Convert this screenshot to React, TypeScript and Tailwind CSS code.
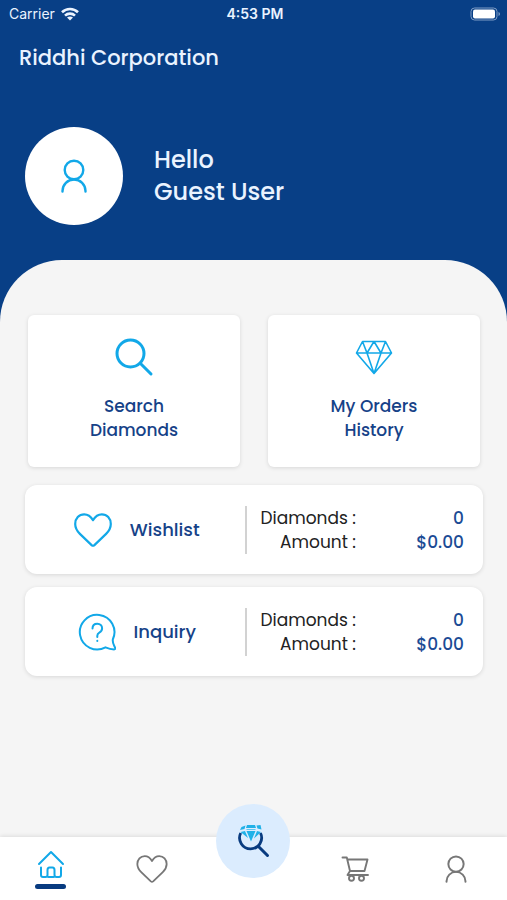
import type { ReactNode } from 'react'

interface Summary {
  label: string
  icon: ReactNode
  diamonds: number
  amount: string
}

function UserIcon({ className }: { className: string }) {
  return (
    <svg viewBox="0 0 26 34" fill="none" stroke="currentColor" strokeWidth="2.4" strokeLinecap="round" className={className} aria-hidden="true">
      <circle cx="13" cy="11" r="9.3" />
      <path d="M1.5 32.500v-.5a11.500 11.500 0 0 1 23 0v.5" />
    </svg>
  )
}

function HeartIcon({ className }: { className: string }) {
  return (
    <svg viewBox="0 0 38 34" fill="none" stroke="currentColor" strokeWidth="2.2" strokeLinejoin="round" className={className} aria-hidden="true">
      <path d="M19 7.2C16.500 3 13.500 1.300 10.200 1.300 5 1.300 1.200 5.500 1.200 11c0 4.200 1.800 7 4.700 9.900l11.700 11.200q1.400 1.200 2.800 0l11.700-11.200c2.900-2.900 4.700-5.700 4.700-9.900 0-5.500-3.800-9.700-9-9.700C24.500 1.300 21.500 3 19 7.200Z" />
    </svg>
  )
}

function SearchIcon() {
  return (
    <svg viewBox="0 0 40 40" fill="none" stroke="currentColor" strokeWidth="3" strokeLinecap="round" className="size-10" aria-hidden="true">
      <circle cx="16.500" cy="16.500" r="13.500" />
      <path d="m26.500 26.500 10.500 10.500" />
    </svg>
  )
}

function DiamondIcon() {
  return (
    <svg viewBox="0 0 40 40" fill="none" stroke="currentColor" strokeWidth="1.600" strokeLinejoin="round" className="size-10" aria-hidden="true">
      <path d="M8.500 4.500h23l6 11.500L20 36.500 2.500 16ZM2.500 16h35M8.500 4.500l4.500 11.500L20 4.500l7 11.500 4.500-11.500M13 16l7 20.500L27 16" />
    </svg>
  )
}

function InquiryIcon() {
  return (
    <svg viewBox="0 0 38 38" fill="none" stroke="currentColor" strokeWidth="2" strokeLinecap="round" strokeLinejoin="round" className="size-[38px]" aria-hidden="true">
      <path d="M34.800 26.500A17.300 17.300 0 1 0 27.500 34.300c2.800 1.200 5.400 2 8.600 2.100 1 0 1.400-.6 1.100-1.500-1.200-2.800-2.800-4.300-2.400-8.400Z" />
      <path d="M14.500 15.500c0-3 2-4.800 4.800-4.800s4.800 1.900 4.800 4.600c0 2.300-1.200 3.500-2.800 4.300-1.500.8-2 1.500-2 3.100v1.300M19.300 27.800v.3" />
    </svg>
  )
}

function HomeIcon() {
  return (
    <svg viewBox="0 0 28 30" fill="none" stroke="currentColor" strokeWidth="2" strokeLinecap="round" strokeLinejoin="round" className="h-[30px] w-7" aria-hidden="true">
      <path d="M2 14 14 2l12 12" />
      <path d="M4 17.500V25q0 2 2 2h2.500q2 0 2-2v-5q0-2.500 2-2.500h3q2 0 2 2.500v5q0 2 2 2H22q2 0 2-2v-7.500M11.500 27h5" />
    </svg>
  )
}

function CartIcon() {
  return (
    <svg viewBox="0 0 28 28" fill="none" stroke="currentColor" strokeWidth="1.900" strokeLinecap="round" strokeLinejoin="round" className="size-7" aria-hidden="true">
      <path d="M1.500 2.500h4.300L9 16h14.500L26.500 4.500H6.500M9 16l-2.500 4h20.500" />
      <circle cx="10.500" cy="23.300" r="2.500" />
      <circle cx="20.500" cy="23.300" r="2.500" />
    </svg>
  )
}

function DiamondSearchIcon() {
  return (
    <svg viewBox="0 0 34 36" fill="none" className="h-9 w-[34px]" aria-hidden="true">
      <path d="M4.700 10a11 11 0 1 0 19.800 0" stroke="#083b80" strokeWidth="2.800" />
      <path d="m22.500 23.500 9 9" stroke="#083b80" strokeWidth="3" strokeLinecap="round" />
      <g fill="#20b1e8">
        <path d="m5.500 4 4-1.500-1 3.500-4.500 1ZM11 2h8l1 3H10ZM20.500 2.500l4-.5 1 4.500-4-1Z" />
        <path d="m4.500 9 4.500-1 3 7ZM10.500 8h9L15 18.500ZM21 8l4 1-7 6.500Z" />
      </g>
      <path d="M10.500 6.500h9" stroke="#5fc6ef" />
    </svg>
  )
}

function StatusBar() {
  return (
    <div className="grid h-7 grid-cols-3 items-center pr-[6px] pl-[9px] font-[Inter,sans-serif]">
      <div className="flex items-center gap-[6px]">
        <span className="text-sm">Carrier</span>
        <svg viewBox="0 0 18 14" className="h-[14px] w-[18px]" fill="none" stroke="currentColor" strokeWidth="2.600" aria-hidden="true">
          <path d="M1 5.200a11.500 11.500 0 0 1 16 0M4 8.600a7.200 7.200 0 0 1 10 0" />
          <path d="m9 13.500-3-3q3-2 6 0Z" fill="currentColor" stroke="none" />
        </svg>
      </div>
      <span className="text-center text-sm font-semibold">4:53 PM</span>
      <svg viewBox="0 0 31 14" className="h-[14px] w-[31px] justify-self-end" aria-hidden="true">
        <rect x="1" y="1" width="26" height="12" rx="3.500" fill="none" stroke="#7f9dc5" />
        <rect x="3" y="2.500" width="22" height="9" rx="2" fill="#fff" />
        <path d="M28.500 5v4q1.500-.7 1.500-2t-1.500-2Z" fill="#7f9dc5" />
      </svg>
    </div>
  )
}

function ActionCard({ icon, lines }: { icon: ReactNode; lines: string[] }) {
  return (
    <button type="button" className="flex h-[152px] flex-col items-center rounded-md bg-white pt-[22px] shadow-[0_1px_4px_rgba(0,0,0,0.12)]">
      <span className="text-[#12a8e8]">{icon}</span>
      <span className="mt-[17px] text-[17px] leading-6 font-medium text-[#164288]">
        {lines.map(line => (
          <span key={line} className="block">{line}</span>
        ))}
      </span>
    </button>
  )
}

function SummaryCard({ label, icon, diamonds, amount }: Summary) {
  return (
    <section className="flex h-[89px] items-center rounded-xl bg-white pr-[19px] shadow-[0_1px_4px_rgba(0,0,0,0.12)]">
      <button type="button" className="flex w-1/2 items-center justify-center gap-[18px] pl-1">
        <span className="text-[#12a8e8]">{icon}</span>
        <span className="text-lg font-medium text-[#164288]">{label}</span>
      </button>
      <dl className="grid flex-1 grid-cols-[auto_1fr] border-l-2 border-[#d2d2d2] pl-[14px] text-right text-[17px] leading-6">
        <dt className="text-[#222]">Diamonds :</dt>
        <dd className="font-medium text-[#1b4b95]">{diamonds}</dd>
        <dt className="text-[#222]">Amount :</dt>
        <dd className="font-medium text-[#1b4b95]">{amount}</dd>
      </dl>
    </section>
  )
}

const summaries: Summary[] = [
  { label: 'Wishlist', icon: <HeartIcon className="h-[34px] w-[38px]" />, diamonds: 0, amount: '$0.00' },
  { label: 'Inquiry', icon: <InquiryIcon />, diamonds: 0, amount: '$0.00' },
]

export default function App() {
  return (
    <div className="flex min-h-screen flex-col bg-[#083f86] font-['Poppins',Inter,sans-serif]">
      <header className="flex h-[260px] flex-col text-[#eaf3ff]">
        <StatusBar />
        <h1 className="mt-[15px] px-[19px] text-[21px] leading-[30px] font-medium">Riddhi Corporation</h1>
        <div className="mt-[54px] flex items-center gap-[31px] px-[25px]">
          <div className="flex size-[98px] items-center justify-center rounded-full bg-white text-[#12a8e8]">
            <UserIcon className="h-[34px] w-[26px]" />
          </div>
          <p className="text-2xl leading-8 font-medium">
            Hello
            <br />
            Guest User
          </p>
        </div>
      </header>

      <main className="flex-1 rounded-t-[62px] bg-[#f5f5f5] pt-[55px] pr-6 pb-12 pl-[25px]">
        <div className="grid grid-cols-2 gap-7 px-[3px]">
          <ActionCard icon={<SearchIcon />} lines={['Search', 'Diamonds']} />
          <ActionCard icon={<DiamondIcon />} lines={['My Orders', 'History']} />
        </div>
        <div className="mt-[18px] flex flex-col gap-[13px]">
          {summaries.map(summary => (
            <SummaryCard key={summary.label} {...summary} />
          ))}
        </div>
      </main>

      {/* Bottom tabs */}
      <nav className="grid h-[63px] grid-cols-5 bg-white text-[#777] shadow-[0_-1px_4px_rgba(0,0,0,0.1)]">
        <button type="button" aria-label="Home" aria-current="page" className="flex flex-col items-center justify-end gap-1 pb-[11px] text-[#12a8e8]">
          <HomeIcon />
          <span className="h-[5px] w-[31px] rounded-full bg-[#083b80]" />
        </button>
        <button type="button" aria-label="Wishlist" className="flex items-center justify-center">
          <HeartIcon className="h-7 w-8" />
        </button>
        <div className="relative">
          <button type="button" aria-label="Search diamonds" className="absolute -top-[33px] left-1/2 flex size-[74px] -translate-x-1/2 items-center justify-center rounded-full bg-[#dbecfe]">
            <DiamondSearchIcon />
          </button>
        </div>
        <button type="button" aria-label="Cart" className="flex items-center justify-center">
          <CartIcon />
        </button>
        <button type="button" aria-label="Profile" className="flex items-center justify-center">
          <UserIcon className="h-7 w-[22px]" />
        </button>
      </nav>
    </div>
  )
}
